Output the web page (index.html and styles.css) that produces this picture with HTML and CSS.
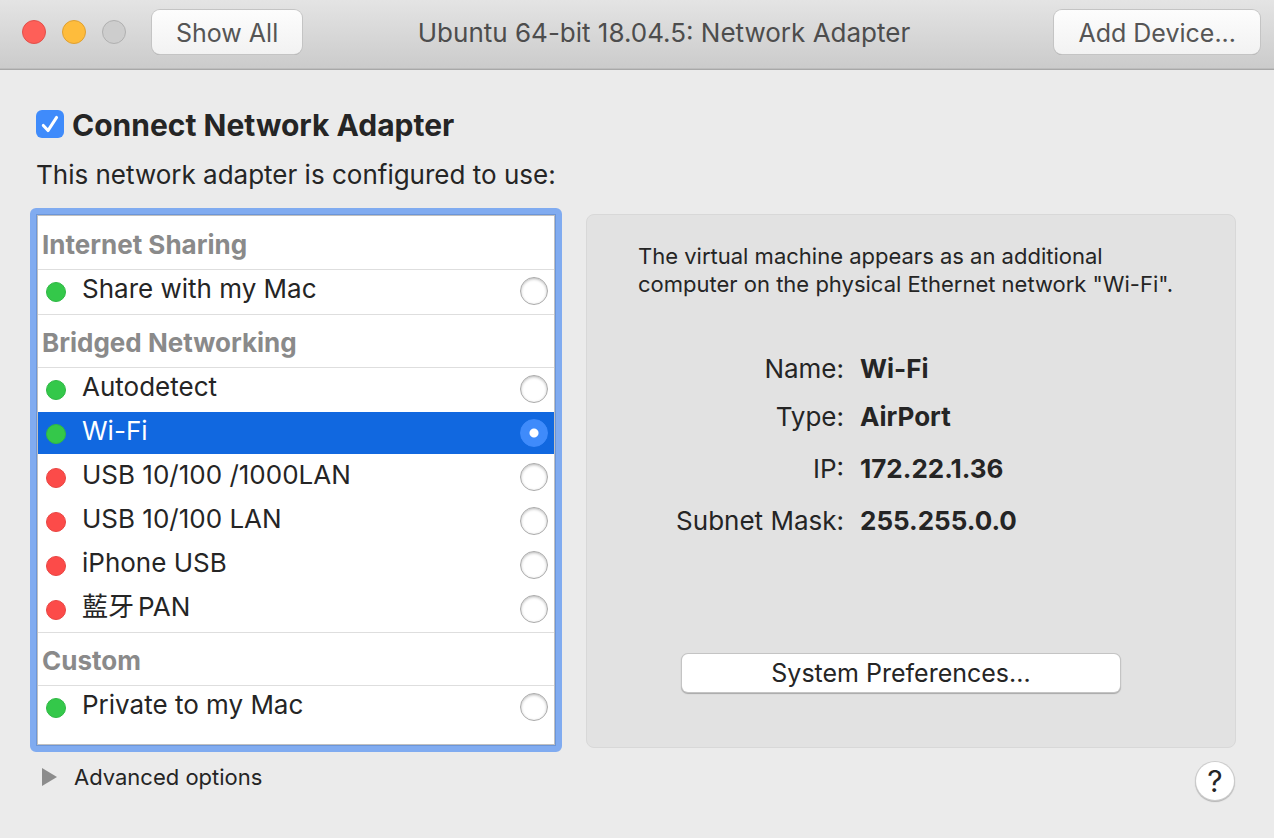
FILE: index.html
```html
<!DOCTYPE html>
<html lang="en">
<head>
<meta charset="utf-8">
<meta name="viewport" content="width=device-width, initial-scale=1">
<title>Ubuntu 64-bit 18.04.5: Network Adapter</title>
<link rel="stylesheet" href="styles.css">
</head>
<body>
<header class="titlebar">
  <div class="titlebar-start">
    <div class="lights">
      <button class="light light-close" type="button" aria-label="Close"></button>
      <button class="light light-minimize" type="button" aria-label="Minimize"></button>
      <button class="light light-zoom" type="button" aria-label="Zoom" disabled></button>
    </div>
    <button class="toolbar-button" type="button">Show All</button>
  </div>
  <h1 class="title">Ubuntu 64-bit 18.04.5: Network Adapter</h1>
  <div class="titlebar-end">
    <button class="toolbar-button" type="button">Add Device...</button>
  </div>
</header>
<main class="content">
  <div class="connect">
    <span class="check">
      <input class="check-input" type="checkbox" id="connect" checked>
      <svg class="check-mark" viewBox="0 0 28 28" aria-hidden="true"><path d="M7.3 15.4 L12 20.6 L20.6 7.4"/></svg>
    </span>
    <label class="connect-label" for="connect">Connect Network Adapter</label>
  </div>
  <p class="intro" id="intro">This network adapter is configured to use:</p>
  <div class="columns">
    <form class="list" aria-labelledby="intro">
      <h2 class="group">Internet Sharing</h2>
      <label class="row"><span class="dot dot-up"></span><span class="row-name">Share with my Mac</span><input class="radio" type="radio" name="network"></label>
      <h2 class="group">Bridged Networking</h2>
      <label class="row"><span class="dot dot-up"></span><span class="row-name">Autodetect</span><input class="radio" type="radio" name="network"></label>
      <label class="row row-selected"><span class="dot dot-up"></span><span class="row-name">Wi-Fi</span><input class="radio" type="radio" name="network" checked></label>
      <label class="row"><span class="dot dot-down"></span><span class="row-name">USB 10/100 /1000LAN</span><input class="radio" type="radio" name="network"></label>
      <label class="row"><span class="dot dot-down"></span><span class="row-name">USB 10/100 LAN</span><input class="radio" type="radio" name="network"></label>
      <label class="row"><span class="dot dot-down"></span><span class="row-name">iPhone USB</span><input class="radio" type="radio" name="network"></label>
      <label class="row"><span class="dot dot-down"></span><span class="row-name"><span class="han" lang="zh-Hant">藍牙</span>PAN</span><input class="radio" type="radio" name="network"></label>
      <h2 class="group">Custom</h2>
      <label class="row"><span class="dot dot-up"></span><span class="row-name">Private to my Mac</span><input class="radio" type="radio" name="network"></label>
    </form>
    <section class="panel">
      <p class="description">The virtual machine appears as an additional computer on the physical Ethernet network "Wi-Fi".</p>
      <dl class="facts">
        <dt>Name:</dt><dd>Wi-Fi</dd>
        <dt>Type:</dt><dd>AirPort</dd>
        <dt class="address">IP:</dt><dd class="address">172.22.1.36</dd>
        <dt class="address">Subnet Mask:</dt><dd class="address">255.255.0.0</dd>
      </dl>
      <button class="preferences" type="button">System Preferences...</button>
    </section>
  </div>
  <footer class="footer">
    <button class="advanced" type="button" aria-expanded="false">
      <svg class="triangle" viewBox="0 0 16 18" aria-hidden="true"><path d="M0 0 L15 9 L0 18 Z"/></svg>
      Advanced options
    </button>
    <button class="help" type="button" aria-label="Help">?</button>
  </footer>
</main>
</body>
</html>
```

FILE: styles.css
```css
* { box-sizing: border-box; }

body {
  margin: 0;
  background: #ebebeb;
  color: #252525;
  font-family: Inter, "Noto Sans CJK TC", sans-serif;
  font-size: 26px;
  line-height: 32px;
}

button { font: inherit; color: inherit; padding: 0; border: 0; background: none; }
h1, h2, p, dl, dd { margin: 0; }

.titlebar {
  display: grid;
  grid-template-columns: 1fr auto 1fr;
  align-items: start;
  height: 70px;
  padding: 10px 14px 0 22px;
  background: linear-gradient(#e4e4e4, #cbcbcb);
  border-bottom: 1px solid #a8a8a8;
  box-shadow: inset 0 -1px #bdbdbd;
  color: #4d4d4d;
}

.titlebar-start { display: flex; align-items: center; gap: 26px; }
.titlebar-end { display: flex; justify-content: flex-end; }
.lights { display: flex; gap: 16px; }

.light { width: 24px; height: 24px; border: 1px solid; border-radius: 50%; }
.light-close { background: #fe5f58; border-color: #e2504a; }
.light-minimize { background: #febc3c; border-color: #dfa032; }
.light-zoom { background: #cdcdcd; border-color: #b0b0b0; }

.title { padding-left: 46px; font-size: 26px; font-weight: 400; line-height: 46px; }

.toolbar-button {
  height: 44px;
  padding: 2px 24px 0;
  border-radius: 8px;
  background: linear-gradient(#fdfdfd, #f2f2f2);
  box-shadow: 0 0 0 1px #c4c4c4, 0 1px #a0a0a0;
  color: #555;
  font-size: 25px;
}

.content { padding: 37px 38px 36px 30px; }

.connect { display: flex; gap: 8px; padding-left: 6px; }
.check { display: grid; width: 28px; height: 28px; margin-top: 3px; }
.check-input, .check-mark { grid-area: 1 / 1; width: 28px; height: 28px; margin: 0; }
.check-input { appearance: none; border-radius: 6px; background: #3f8bfb; }
.check-mark {
  fill: none;
  stroke: #fff;
  stroke-width: 3;
  stroke-linecap: round;
  stroke-linejoin: round;
  pointer-events: none;
}
.connect-label { font-size: 30px; font-weight: 700; line-height: 36px; }

.intro { padding: 16px 6px 17px; }

.columns { display: grid; grid-template-columns: 532fr 650fr; column-gap: 24px; }

.list {
  padding: 2px 2px 16px;
  border: 6px solid #80abf0;
  border-radius: 6px;
  background: #fff;
  box-shadow: inset 0 0 0 1px #6b95d8, inset 0 0 0 2px #c0c0c0;
}

.group {
  padding: 11px 4px 7px;
  border: solid #dedede;
  border-width: 1px 0;
  color: #8a8a8a;
  font-size: 26px;
  font-weight: 700;
  line-height: 34px;
}
.group:first-child { border-top-color: transparent; }

.row { display: flex; height: 44px; padding: 0 6px 2px 8px; }
.row-selected {
  background: linear-gradient(#1168e0, #1168e0) top / 100% 42px no-repeat;
  color: #fff;
}
.row-name { flex: 1; padding: 3px 16px 0; line-height: 32px; }
.han { margin-right: 4px; }

.dot { width: 20px; height: 20px; margin-top: 12px; border: 1px solid; border-radius: 50%; }
.dot-up { background: #34c84a; border-color: #2fb844; }
.dot-down { background: #fc4b49; border-color: #e94542; }

.radio {
  appearance: none;
  width: 28px;
  height: 28px;
  margin: 7px 0 0;
  border: 1px solid #ababab;
  border-radius: 50%;
  background: #fff;
  box-shadow: inset 0 1px 3px #b8b8b8;
}
.radio:checked {
  border-color: #3f8bfb;
  background: radial-gradient(circle, #fff 4px, #3f8bfb 5px);
  box-shadow: none;
}

.panel {
  display: flex;
  flex-direction: column;
  margin: 6px 0 4px;
  padding: 27px 51px 55px;
  border: 1px solid #d8d8d8;
  border-radius: 8px;
  background: #e2e2e2;
}
.description { font-size: 22px; line-height: 28px; }

.facts {
  display: grid;
  grid-template-columns: 206px 1fr;
  gap: 16px;
  margin: 55px 0 auto;
}
.facts dt { text-align: right; }
.facts dd { font-weight: 700; }
.facts .address { padding-top: 4px; }

.preferences {
  height: 38px;
  margin: 0 64px 0 44px;
  border-radius: 6px;
  background: #fff;
  box-shadow: 0 0 0 1px #c4c4c4, 0 1px 1px 1px #a8a8a8;
  font-size: 25px;
}

.footer { display: flex; justify-content: space-between; align-items: flex-start; padding: 10px 2px 0 12px; }
.advanced { display: flex; align-items: center; gap: 16px; font-size: 22px; line-height: 30px; }
.triangle { width: 16px; height: 18px; fill: #8c8c8c; }
.help {
  width: 38px;
  height: 38px;
  border-radius: 50%;
  background: #fff;
  box-shadow: 0 0 0 1px #cdcdcd, 0 1px 1px 1px #b4b4b4;
  font-size: 30px;
}
```
